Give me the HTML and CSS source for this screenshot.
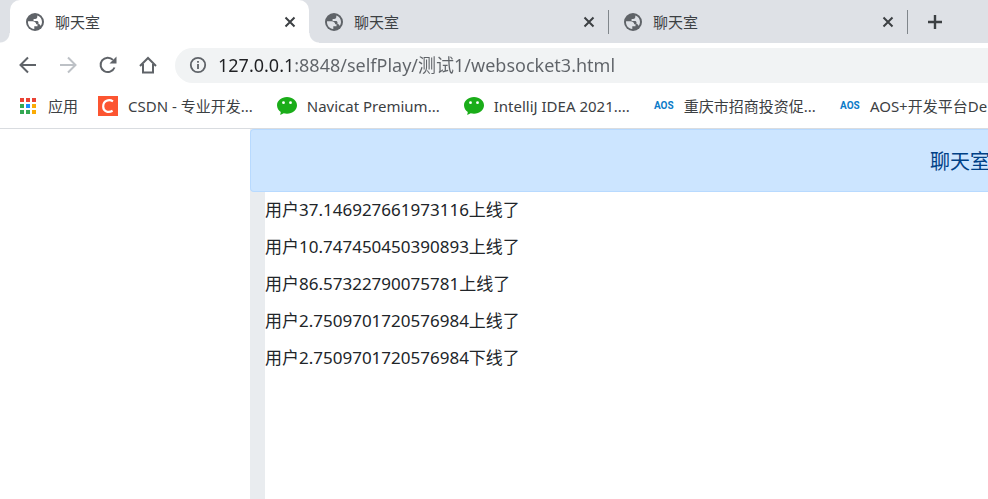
FILE: index.html
```html
<!DOCTYPE html>
<html lang="zh-CN">
<head>
    <meta charset="UTF-8">
    <meta name="viewport" content="width=device-width, initial-scale=1.0">
    <title>聊天室</title>
    <link rel="stylesheet" href="styles.css">
</head>
<body>

<!-- shared icons -->
<svg class="sprite" aria-hidden="true">
    <symbol id="globe" viewBox="0 0 18 18">
        <circle cx="9" cy="9" r="9" fill="#5f6368"/>
        <path d="M2 8.200H6.500C8.700 8.200 10.200 9.500 10.200 11.300H11.500V13.200H8.300V15.900C4.500 15.700 1.700 12.500 2 8.200Z"/>
        <path d="M11.300 2.400C14.300 3.300 16.100 6 16 9.300C15.900 10.800 15.400 12 14.700 13C14.300 11.800 13.600 11.200 12.500 11V9.500C12.500 8.600 11.800 8 10.900 8H7.600V5.900H9.200C10.300 5.900 11.300 5 11.300 3.900Z"/>
    </symbol>
    <symbol id="close" viewBox="0 0 12 12">
        <path d="M1.500 1.500L10.500 10.500M10.500 1.500L1.500 10.500" fill="none" stroke="#3c4043" stroke-width="2"/>
    </symbol>
    <symbol id="wechat" viewBox="0 0 20 18">
        <path d="M10 0C4.400 0 0 3.700 0 8.300C0 11.300 1.600 13.500 3.800 15L3.200 18L6.700 16.200C7.700 16.500 8.800 16.700 10 16.700C15.600 16.700 20 13 20 8.300C20 3.700 15.600 0 10 0Z" fill="#1aad19"/>
        <circle cx="6.500" cy="5.700" r="1.400" fill="#fff"/>
        <circle cx="13.500" cy="5.700" r="1.400" fill="#fff"/>
    </symbol>
</svg>

<div class="tab-strip">
    <div class="tab active">
        <svg class="tab-icon"><use href="#globe"/></svg>
        <span class="tab-title">聊天室</span>
        <button type="button" class="tab-close" aria-label="关闭"><svg><use href="#close"/></svg></button>
    </div>
    <div class="tab">
        <svg class="tab-icon"><use href="#globe"/></svg>
        <span class="tab-title">聊天室</span>
        <button type="button" class="tab-close" aria-label="关闭"><svg><use href="#close"/></svg></button>
    </div>
    <div class="tab">
        <svg class="tab-icon"><use href="#globe"/></svg>
        <span class="tab-title">聊天室</span>
        <button type="button" class="tab-close" aria-label="关闭"><svg><use href="#close"/></svg></button>
    </div>
    <button type="button" class="new-tab" aria-label="新标签页">
        <svg viewBox="0 0 16 16"><path d="M8 1V15M1 8H15" fill="none" stroke="#3c4043" stroke-width="2.400"/></svg>
    </button>
</div>

<div class="toolbar">
    <button type="button" class="nav-btn" aria-label="后退">
        <svg viewBox="0 0 20 20"><path d="M18 10H3M10 2.500L2.500 10L10 17.500"/></svg>
    </button>
    <button type="button" class="nav-btn disabled" aria-label="前进">
        <svg viewBox="0 0 20 20"><path d="M2 10H17M10 2.500L17.500 10L10 17.500"/></svg>
    </button>
    <button type="button" class="nav-btn" aria-label="刷新">
        <svg viewBox="0 0 20 20"><path d="M16.500 12.500A7.200 7.200 0 1 1 15 4.900"/><path d="M18.500 1.500V8.500H11.500Z" class="solid"/></svg>
    </button>
    <button type="button" class="nav-btn" aria-label="主页">
        <svg viewBox="0 0 20 20"><path d="M2 11L10 3L18 11M5 9V17.500H15V9"/></svg>
    </button>
    <div class="address-bar">
        <svg viewBox="0 0 18 18"><circle cx="9" cy="9" r="7.200" fill="none" stroke="#5f6368" stroke-width="1.800"/><path d="M9 8V13M9 5V6.800" stroke="#5f6368" stroke-width="1.800"/></svg>
        <input type="text" class="url" aria-label="地址" value="127.0.0.1:8848/selfPlay/测试1/websocket3.html">
    </div>
</div>

<nav class="bookmarks">
    <a href="#" class="bookmark apps">
        <svg viewBox="0 0 16 16">
            <path d="M0 0H4V4H0ZM6 0H10V4H6ZM12 0H16V4H12Z" fill="#ea4335"/>
            <path d="M0 6H4V10H0ZM0 12H4V16H0ZM6 12H10V16H6Z" fill="#34a853"/>
            <path d="M6 6H10V10H6Z" fill="#1a8cff"/>
            <path d="M12 6H16V10H12ZM12 12H16V16H12Z" fill="#fbab05"/>
        </svg>
        <span>应用</span>
    </a>
    <a href="#" class="bookmark">
        <svg viewBox="0 0 20 20"><rect width="20" height="20" fill="#fc5531"/><path d="M15 5.400C11 2.800 5.200 4.600 5.200 10.400C5.200 15.700 10.500 17 14.600 14.800" fill="none" stroke="#fff" stroke-width="2.200"/></svg>
        <span>CSDN - 专业开发...</span>
    </a>
    <a href="#" class="bookmark">
        <svg><use href="#wechat"/></svg>
        <span>Navicat Premium...</span>
    </a>
    <a href="#" class="bookmark">
        <svg><use href="#wechat"/></svg>
        <span>IntelliJ IDEA 2021....</span>
    </a>
    <a href="#" class="bookmark">
        <b class="aos">AOS</b>
        <span>重庆市招商投资促...</span>
    </a>
    <a href="#" class="bookmark">
        <b class="aos">AOS</b>
        <span>AOS+开发平台De</span>
    </a>
</nav>

<main class="chat-room">
    <h1 class="alert">聊天室</h1>
    <div class="messages">
        <p>用户37.146927661973116上线了</p>
        <p>用户10.747450450390893上线了</p>
        <p>用户86.57322790075781上线了</p>
        <p>用户2.7509701720576984上线了</p>
        <p>用户2.7509701720576984下线了</p>
    </div>
</main>

</body>
</html>
```
FILE: styles.css
```css
* {
    box-sizing: border-box;
}
body {
    margin: 0;
    min-height: 100vh;
    display: flex;
    flex-direction: column;
    overflow: hidden;
    background-color: #fff;
    color: #212529;
    font-family: "Noto Sans", "Noto Sans CJK SC", sans-serif;
    font-size: 15px;
}
button {
    padding: 0;
    border: none;
    background: none;
    cursor: pointer;
}
svg {
    display: block;
    flex: none;
}
.sprite {
    position: absolute;
    width: 0;
    height: 0;
}

/* tabs */
.tab-strip {
    display: flex;
    height: 43px;
    padding-left: 10px;
    background-color: #dee1e6;
}
.tab {
    position: relative;
    display: flex;
    align-items: center;
    flex: 0 1 299px;
    padding: 0 13px 0 16px;
    color: #3c4043;
}
.tab.active {
    background-color: #fff;
    border-radius: 10px 10px 0 0;
}
.tab.active::before,
.tab.active::after {
    content: "";
    position: absolute;
    bottom: 0;
    width: 10px;
    height: 10px;
}
.tab.active::before {
    right: 100%;
    background: radial-gradient(circle at 0 0, #dee1e6 9px, #fff 10px);
}
.tab.active::after {
    left: 100%;
    background: radial-gradient(circle at 100% 0, #dee1e6 9px, #fff 10px);
}
.tab:not(.active)::after {
    content: "";
    position: absolute;
    right: -1px;
    top: 10px;
    width: 1px;
    height: 24px;
    background-color: #80868b;
}
.tab-icon {
    width: 18px;
    height: 18px;
    margin-right: 11px;
    fill: #dee1e6;
}
.active .tab-icon {
    fill: #fff;
}
.tab-title {
    flex: 1;
    line-height: 20px;
}
.tab-close svg {
    width: 12px;
    height: 12px;
}
.new-tab {
    margin-left: 20px;
}
.new-tab svg {
    width: 16px;
    height: 16px;
}

/* toolbar */
.toolbar {
    display: flex;
    align-items: center;
    gap: 20px;
    height: 44px;
    padding-left: 18px;
}
.nav-btn svg {
    width: 20px;
    height: 20px;
    fill: none;
    stroke: #5f6368;
    stroke-width: 2;
}
.nav-btn .solid {
    fill: #5f6368;
    stroke: none;
}
.nav-btn.disabled svg {
    stroke: #bdc1c6;
}
.address-bar {
    display: flex;
    align-items: center;
    flex: 1;
    height: 35px;
    margin-left: -3px;
    padding-left: 14px;
    background-color: #f1f3f4;
    border-radius: 18px 0 0 18px;
}
.address-bar svg {
    width: 18px;
    height: 18px;
}
.url {
    flex: 1;
    min-width: 0;
    margin-left: 11px;
    padding: 0;
    border: none;
    outline: none;
    font-family: inherit;
    font-size: 18px;
    line-height: 26px;
    color: transparent;
    /* host is darker than the path */
    background: linear-gradient(to right, #202124 76px, #5f6368 76px);
    -webkit-background-clip: text;
    background-clip: text;
}

/* bookmarks */
.bookmarks {
    display: flex;
    align-items: center;
    gap: 24px;
    height: 42px;
    padding: 0 0 4px 18px;
    border-bottom: 1px solid #d9dce0;
}
.bookmark {
    display: flex;
    align-items: center;
    gap: 10px;
    flex: none;
    color: #3c4043;
    line-height: 20px;
    text-decoration: none;
    white-space: nowrap;
}
.bookmark svg {
    width: 20px;
    height: 20px;
}
.bookmark.apps {
    margin-right: -4px;
}
.apps svg {
    padding: 2px;
}
.aos {
    width: 20px;
    color: #0c7bc8;
    font-family: Roboto, sans-serif;
    font-size: 10px;
    text-align: center;
}

/* chat */
.chat-room {
    display: flex;
    flex-direction: column;
    flex: 1;
    margin-left: 250px;
    background-color: #e9ecef;
}
.alert {
    margin: 0 -2px 0 0;
    padding: 17px 0 15px;
    color: #004085;
    background-color: #cce5ff;
    border: 1px solid #b8daff;
    border-right: none;
    border-radius: 4px 0 0 4px;
    font-size: 20px;
    font-weight: 400;
    line-height: 29px;
    text-align: right;
}
.messages {
    flex: 1;
    margin-left: 15px;
    padding-top: 5px;
    background-color: #fff;
    font-size: 17px;
    line-height: 26px;
}
.messages p {
    margin: 0 0 11px;
}
```
